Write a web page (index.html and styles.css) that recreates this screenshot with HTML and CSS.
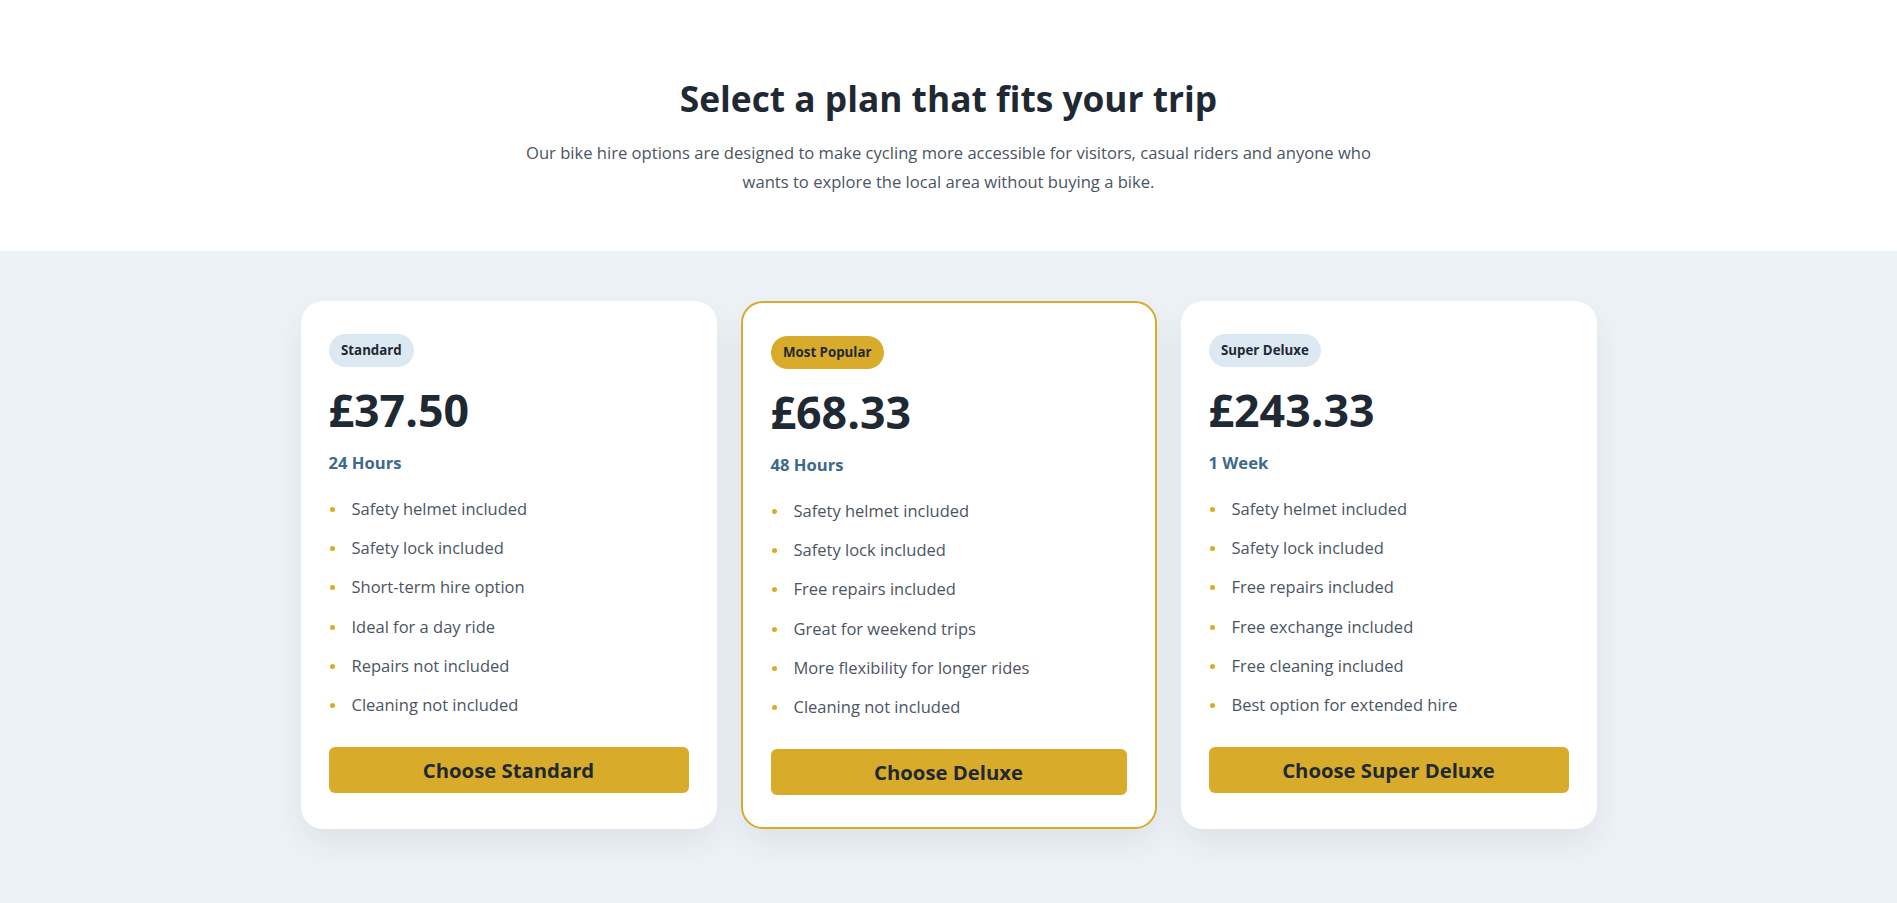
FILE: index.html
```html
<!DOCTYPE html>
<html lang="en">
<head>
<meta charset="utf-8">
<title>Bike hire plans</title>
<link rel="stylesheet" href="styles.css">
</head>
<body>
<header class="intro">
  <h1 class="intro-title">Select a plan that fits your trip</h1>
  <p class="intro-text">Our bike hire options are designed to make cycling more accessible for visitors, casual riders and anyone who wants to explore the local area without buying a bike.</p>
</header>
<section class="plans">
  <div class="plan-grid">
    <article class="plan">
      <span class="badge">Standard</span>
      <div class="price">£37.50</div>
      <div class="period">24 Hours</div>
      <ul class="features">
        <li>Safety helmet included</li>
        <li>Safety lock included</li>
        <li>Short-term hire option</li>
        <li>Ideal for a day ride</li>
        <li>Repairs not included</li>
        <li>Cleaning not included</li>
      </ul>
      <button class="choose">Choose Standard</button>
    </article>
    <article class="plan plan-featured">
      <span class="badge badge-gold">Most Popular</span>
      <div class="price">£68.33</div>
      <div class="period">48 Hours</div>
      <ul class="features">
        <li>Safety helmet included</li>
        <li>Safety lock included</li>
        <li>Free repairs included</li>
        <li>Great for weekend trips</li>
        <li>More flexibility for longer rides</li>
        <li>Cleaning not included</li>
      </ul>
      <button class="choose">Choose Deluxe</button>
    </article>
    <article class="plan">
      <span class="badge">Super Deluxe</span>
      <div class="price">£243.33</div>
      <div class="period">1 Week</div>
      <ul class="features">
        <li>Safety helmet included</li>
        <li>Safety lock included</li>
        <li>Free repairs included</li>
        <li>Free exchange included</li>
        <li>Free cleaning included</li>
        <li>Best option for extended hire</li>
      </ul>
      <button class="choose">Choose Super Deluxe</button>
    </article>
  </div>
</section>
</body>
</html>
```
FILE: styles.css
```css
* { box-sizing: border-box; }
body {
  margin: 0;
  font-family: "Open Sans", "Noto Sans", sans-serif;
  color: #1f2933;
  background: #ffffff;
}
.intro {
  padding: 78px 20px 55px;
  text-align: center;
}
.intro-title {
  margin: 0;
  font-size: 35.3px;
  line-height: 40px;
  font-weight: 700;
  color: #1f2933;
}
.intro-text {
  max-width: 880px;
  margin: 20px auto 0;
  font-size: 16.6px;
  line-height: 29px;
  color: #4b5563;
}
.plans {
  background: #edf2f6;
  padding: 50px 20px 80px;
}
.plan-grid {
  width: 1296px;
  margin: 0 auto;
  display: grid;
  grid-template-columns: repeat(3, 1fr);
  gap: 24px;
}
.plan {
  background: #ffffff;
  border-radius: 22px;
  padding: 33px 28px 32px;
  box-shadow: 0 14px 32px rgba(30, 45, 70, 0.08);
  display: flex;
  flex-direction: column;
  align-items: flex-start;
}
.plan-featured {
  border: 2px solid #d9aa2b;
}
.badge {
  display: inline-block;
  padding: 8px 12.5px;
  border-radius: 999px;
  background: #dce8f2;
  font-size: 13.3px;
  line-height: 17px;
  font-weight: 700;
  color: #1f2933;
}
.badge-gold {
  background: #d9ab2a;
}
.price {
  margin-top: 14px;
  font-size: 44.7px;
  line-height: 58px;
  font-weight: 700;
  color: #1f2933;
}
.period {
  margin-top: 12px;
  font-size: 16.6px;
  line-height: 24px;
  font-weight: 700;
  color: #3d6a8c;
}
.features {
  list-style: none;
  margin: 21px 0 0;
  padding: 0;
  width: 100%;
}
.features li {
  position: relative;
  padding-left: 23px;
  font-size: 16.5px;
  line-height: 25px;
  margin-bottom: 14.2px;
  color: #4b5563;
}
.features li:last-child { margin-bottom: 0; }
.features li::before {
  content: "";
  position: absolute;
  left: 1px;
  top: 11px;
  width: 5px;
  height: 5px;
  border-radius: 50%;
  background: #d9ab2a;
}
.choose {
  margin-top: 30px;
  width: 100%;
  height: 46px;
  border: 0;
  border-radius: 6px;
  background: #d9ab2a;
  font-family: inherit;
  font-size: 20.3px;
  font-weight: 700;
  color: #1f2933;
  cursor: pointer;
}
```
